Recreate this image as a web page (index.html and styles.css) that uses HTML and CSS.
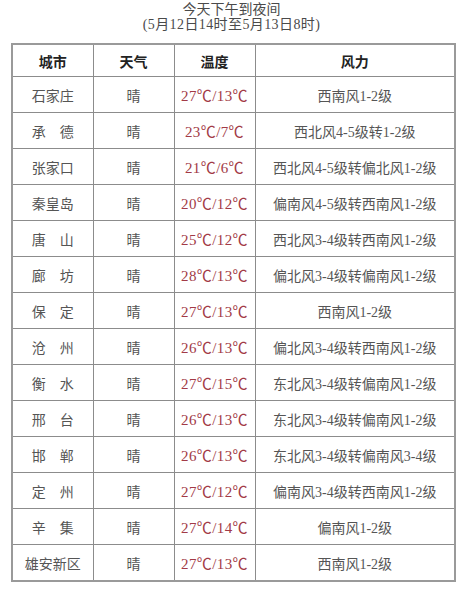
FILE: index.html
```html
<!DOCTYPE html>
<html lang="zh">
<head>
<meta charset="utf-8">
<link rel="stylesheet" href="styles.css">
</head>
<body>
<div class="page">
  <div class="title">
    <div class="t1">今天下午到夜间</div>
    <div class="t2">(5月12日14时至5月13日8时)</div>
  </div>
  <table class="wx">
    <colgroup><col class="c1"><col class="c2"><col class="c3"><col class="c4"></colgroup>
    <thead>
      <tr><th>城市</th><th>天气</th><th>温度</th><th>风力</th></tr>
    </thead>
    <tbody>
      <tr><td>石家庄</td><td>晴</td><td class="temp">27℃/13℃</td><td>西南风1-2级</td></tr>
      <tr><td>承　德</td><td>晴</td><td class="temp">23℃/7℃</td><td>西北风4-5级转1-2级</td></tr>
      <tr><td>张家口</td><td>晴</td><td class="temp">21℃/6℃</td><td>西北风4-5级转偏北风1-2级</td></tr>
      <tr><td>秦皇岛</td><td>晴</td><td class="temp">20℃/12℃</td><td>偏南风4-5级转西南风1-2级</td></tr>
      <tr><td>唐　山</td><td>晴</td><td class="temp">25℃/12℃</td><td>西北风3-4级转西南风1-2级</td></tr>
      <tr><td>廊　坊</td><td>晴</td><td class="temp">28℃/13℃</td><td>偏北风3-4级转偏南风1-2级</td></tr>
      <tr><td>保　定</td><td>晴</td><td class="temp">27℃/13℃</td><td>西南风1-2级</td></tr>
      <tr><td>沧　州</td><td>晴</td><td class="temp">26℃/13℃</td><td>偏北风3-4级转西南风1-2级</td></tr>
      <tr><td>衡　水</td><td>晴</td><td class="temp">27℃/15℃</td><td>东北风3-4级转偏南风1-2级</td></tr>
      <tr><td>邢　台</td><td>晴</td><td class="temp">26℃/13℃</td><td>东北风3-4级转偏南风1-2级</td></tr>
      <tr><td>邯　郸</td><td>晴</td><td class="temp">26℃/13℃</td><td>东北风3-4级转偏南风3-4级</td></tr>
      <tr><td>定　州</td><td>晴</td><td class="temp">27℃/12℃</td><td>偏南风3-4级转西南风1-2级</td></tr>
      <tr><td>辛　集</td><td>晴</td><td class="temp">27℃/14℃</td><td>偏南风1-2级</td></tr>
      <tr><td>雄安新区</td><td>晴</td><td class="temp">27℃/13℃</td><td>西南风1-2级</td></tr>
    </tbody>
  </table>
</div>
</body>
</html>
```

FILE: styles.css
```css
html, body {
  margin: 0;
  padding: 0;
  background: #ffffff;
}
.page {
  width: 463px;
  font-family: "Liberation Serif", "Noto Sans CJK SC", serif;
  color: #555555;
}
.title {
  text-align: center;
  font-size: 14px;
  line-height: 15px;
  padding-top: 2px;
  height: 41px;
  color: #4a4a4a;
}
.t2 {
  letter-spacing: 0.4px;
}
.wx {
  margin-left: 11px;
  width: 443px;
  border-collapse: collapse;
  table-layout: fixed;
  border: 2px solid #9a9a9a;
}
.c1, .c2, .c3 { width: 81px; }
.c4 { width: 200px; }
.wx th, .wx td {
  border: 1px solid #8c8c8c;
  text-align: center;
  padding: 0;
  font-size: 14px;
  white-space: nowrap;
}
.wx th {
  height: 31px;
  font-weight: bold;
  color: #222222;
}
.wx td {
  height: 35px;
  color: #555555;
}
.wx td.temp {
  color: #a23a46;
  font-size: 15px;
  letter-spacing: 0.4px;
}
```
